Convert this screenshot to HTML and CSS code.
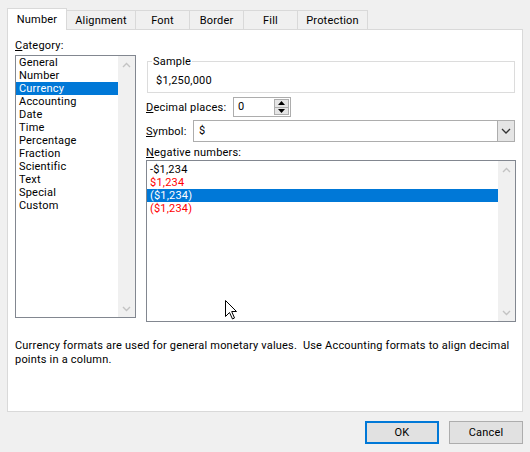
FILE: index.html
```html
<!DOCTYPE html>
<html>
<head>
<meta charset="utf-8">
<link rel="stylesheet" href="styles.css">
</head>
<body>
<div class="dialog">
  <div class="tabs">
    <div class="tab active tab-number">Number</div>
    <div class="tab tab-align">Alignment</div>
    <div class="tab tab-font">Font</div>
    <div class="tab tab-border">Border</div>
    <div class="tab tab-fill">Fill</div>
    <div class="tab tab-prot">Protection</div>
  </div>
  <div class="panel">
    <div class="main">
      <div class="cat-col">
        <div class="label"><u>C</u>ategory:</div>
        <div class="listbox cat-list">
          <div class="items">
            <div class="item">General</div>
            <div class="item">Number</div>
            <div class="item selected">Currency</div>
            <div class="item">Accounting</div>
            <div class="item">Date</div>
            <div class="item">Time</div>
            <div class="item">Percentage</div>
            <div class="item">Fraction</div>
            <div class="item">Scientific</div>
            <div class="item">Text</div>
            <div class="item">Special</div>
            <div class="item">Custom</div>
          </div>
          <div class="vscroll">
            <div class="sbtn"><svg width="9" height="6" viewBox="0 0 9 6"><polyline points="1,5 4.5,1.5 8,5" fill="none" stroke="#c3c3c3" stroke-width="1.4"/></svg></div>
            <div class="sbtn"><svg width="9" height="6" viewBox="0 0 9 6"><polyline points="1,1 4.5,4.5 8,1" fill="none" stroke="#c3c3c3" stroke-width="1.4"/></svg></div>
          </div>
        </div>
      </div>
      <div class="right-col">
        <fieldset class="sample">
          <legend>Sample</legend>
          <div class="sample-value">$1,250,000</div>
        </fieldset>
        <div class="row decimal-row">
          <div class="row-label decimal-label"><u>D</u>ecimal places:</div>
          <div class="spin">
            <div class="spin-text">0</div>
            <div class="spin-btns">
              <div class="spin-btn"><svg width="7" height="4" viewBox="0 0 7 4"><polygon points="0,4 3.5,0 7,4" fill="#000"/></svg></div>
              <div class="spin-btn"><svg width="7" height="4" viewBox="0 0 7 4"><polygon points="0,0 3.5,4 7,0" fill="#000"/></svg></div>
            </div>
          </div>
        </div>
        <div class="row symbol-row">
          <div class="row-label symbol-label"><u>S</u>ymbol:</div>
          <div class="combo">
            <div class="combo-text">$</div>
            <div class="combo-btn"><svg width="10" height="6" viewBox="0 0 10 6"><polyline points="1,1 5,5 9,1" fill="none" stroke="#333" stroke-width="1.3"/></svg></div>
          </div>
        </div>
        <div class="label neg-label"><u>N</u>egative numbers:</div>
        <div class="listbox neg-list">
          <div class="items">
            <div class="item">-$1,234</div>
            <div class="item red">$1,234</div>
            <div class="item selected">($1,234)</div>
            <div class="item red">($1,234)</div>
          </div>
          <div class="vscroll">
            <div class="sbtn"><svg width="9" height="6" viewBox="0 0 9 6"><polyline points="1,5 4.5,1.5 8,5" fill="none" stroke="#c3c3c3" stroke-width="1.4"/></svg></div>
            <div class="sbtn"><svg width="9" height="6" viewBox="0 0 9 6"><polyline points="1,1 4.5,4.5 8,1" fill="none" stroke="#c3c3c3" stroke-width="1.4"/></svg></div>
          </div>
        </div>
      </div>
    </div>
    <p class="desc">Currency formats are used for general monetary values.&nbsp; Use Accounting formats to align decimal points in a column.</p>
  </div>
  <div class="buttons">
    <div class="btn btn-default">OK</div>
    <div class="btn">Cancel</div>
  </div>
  <svg class="cursor" width="13" height="20" viewBox="0 0 13 20"><path d="M0.5,0.5 L0.5,16.5 L4.5,12.5 L7.5,19 L9.5,18 L6.7,11.5 L11.5,11.5 Z" fill="#fff" stroke="#000" stroke-width="1" stroke-linejoin="miter"/></svg>
</div>
</body>
</html>
```

FILE: styles.css
```css
* { box-sizing: border-box; }
html, body { margin: 0; padding: 0; }
body {
  width: 530px;
  height: 452px;
  overflow: hidden;
  background: #f0f0f0;
  font-family: Roboto, "Noto Sans", sans-serif;
  font-size: 11px;
  letter-spacing: 0.2px;
  color: #000;
}
.dialog {
  position: relative;
  height: 452px;
  padding: 8px 7px 0 7px;
}
.tabs {
  display: flex;
  align-items: flex-end;
  height: 21px;
}
.tab {
  height: 19px;
  margin-left: -1px;
  border: 1px solid #d9d9d9;
  border-bottom: none;
  background: #f0f0f0;
  display: flex;
  align-items: center;
  justify-content: center;
  line-height: 1;
  padding-top: 1px;
}
.tab.active {
  height: 22px;
  margin-left: 0;
  margin-bottom: -1px;
  background: #fff;
  position: relative;
  z-index: 1;
  padding-top: 0;
}
.tab-number { width: 60px; }
.tab-align { width: 70px; }
.tab-font { width: 55px; }
.tab-border { width: 55px; }
.tab-fill { width: 55px; }
.tab-prot { width: 71px; }

.panel {
  background: #fff;
  border: 1px solid #d9d9d9;
  height: 383px;
  padding: 8px 6px 0 7px;
}
.main {
  display: flex;
  gap: 10px;
}
.cat-col {
  width: 121px;
  display: flex;
  flex-direction: column;
}
.label {
  height: 15px;
  line-height: 15px;
}
.listbox {
  border: 1px solid #828790;
  background: #fff;
  display: flex;
}
.cat-list {
  margin-top: 2px;
  height: 263px;
}
.items {
  flex: 1;
}
.item {
  height: 13px;
  line-height: 13px;
  padding-left: 3px;
  white-space: nowrap;
}
.item.selected {
  background: #0078d7;
  color: #fff;
}
.item.red { color: #ff0000; }
.vscroll {
  width: 17px;
  background: #f0f0f0;
  display: flex;
  flex-direction: column;
  justify-content: space-between;
}
.sbtn {
  height: 17px;
  display: flex;
  align-items: center;
  justify-content: center;
}

.right-col {
  width: 370px;
  padding-top: 16px;
  display: flex;
  flex-direction: column;
}
.sample {
  margin: 0 1px;
  padding: 4px 4px 4px 4px;
  border: 1px solid #dcdcdc;
  min-width: 0;
}
.sample legend {
  padding: 0 1px;
  line-height: 15px;
  height: 15px;
}
.sample-value {
  line-height: 15px;
  height: 15px;
  padding-left: 4px;
}
.row {
  display: flex;
  align-items: center;
}
.row-label { line-height: 15px; }
.decimal-row {
  margin-top: 4px;
  height: 20px;
}
.decimal-label { width: 87px; }
.spin {
  width: 58px;
  height: 20px;
  border: 1px solid #adadad;
  background: #fff;
  display: flex;
}
.spin-text {
  flex: 1;
  padding-left: 4px;
  line-height: 18px;
}
.spin-btns {
  width: 15px;
  margin: 1px 1px 1px 0;
  display: flex;
  flex-direction: column;
  border: 1px solid #adadad;
  background: #adadad;
  gap: 1px;
}
.spin-btn {
  flex: 1;
  background: #e5e5e5;
  display: flex;
  align-items: center;
  justify-content: center;
}
.symbol-row {
  margin-top: 3px;
  height: 22px;
}
.symbol-label { width: 47px; }
.combo {
  flex: 1;
  height: 22px;
  margin-right: 1px;
  border: 1px solid #adadad;
  background: #fff;
  display: flex;
}
.combo-text {
  flex: 1;
  padding-left: 5px;
  line-height: 20px;
}
.combo-btn {
  width: 17px;
  background: #e5e5e5;
  border-left: 1px solid #adadad;
  display: flex;
  align-items: center;
  justify-content: center;
}
.neg-label { margin-top: 3px; }
.neg-list {
  height: 162px;
}
.neg-list .items { padding-top: 2px; }

.desc {
  margin: 17px 0 0 0;
  line-height: 14px;
  padding-right: 0;
}

.buttons {
  display: flex;
  justify-content: flex-end;
  gap: 10px;
  margin-top: 9px;
}
.btn {
  width: 74px;
  height: 23px;
  background: #e1e1e1;
  border: 1px solid #adadad;
  display: flex;
  align-items: center;
  justify-content: center;
}
.btn-default {
  border: 2px solid #0078d7;
}
.cursor {
  position: absolute;
  left: 225px;
  top: 300px;
}
```
